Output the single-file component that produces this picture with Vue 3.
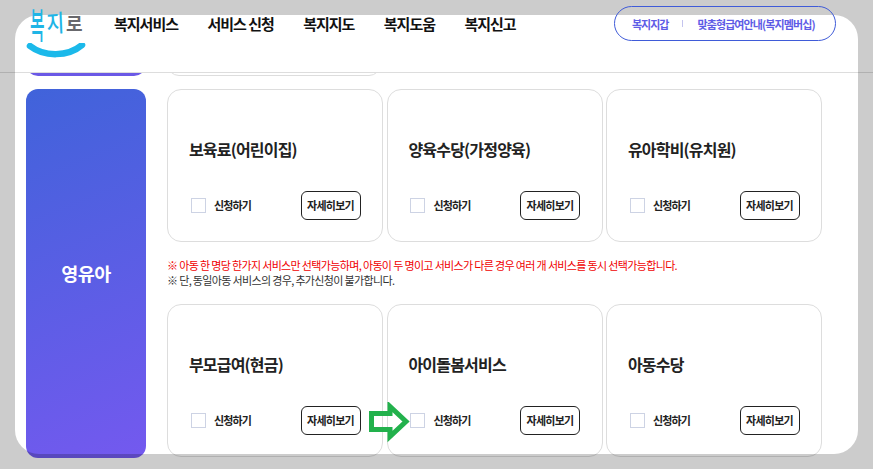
<script setup>
const navItems = ['복지서비스', '서비스 신청', '복지지도', '복지도움', '복지신고']
const rowOne = ['보육료(어린이집)', '양육수당(가정양육)', '유아학비(유치원)']
const rowTwo = ['부모급여(현금)', '아이돌봄서비스', '아동수당']
</script>

<template>
  <div class="page">
    <header class="header">
      <a class="logo" aria-label="복지로">
        <span class="logo-text">
          <span class="ch bok">복</span>
          <span class="ch ji">지</span>
          <span class="ch ro">로</span>
        </span>
        <svg class="smile" width="60" height="18" viewBox="0 0 60 18">
          <path d="M4 3 C 18 14, 42 14, 56 2" fill="none" stroke="#1bb9ea" stroke-width="6.5" stroke-linecap="round" />
        </svg>
      </a>
      <nav class="nav">
        <span v-for="item in navItems" :key="item">{{ item }}</span>
      </nav>
      <div class="pill">
        <span>복지지갑</span>
        <i class="sep"></i>
        <span class="tight">맞춤형급여안내(복지멤버십)</span>
      </div>
    </header>

    <main class="main">
      <div class="stub">
        <div class="stub-side"></div>
        <div class="stub-card"></div>
      </div>
      <section class="section">
        <aside class="side">영유아</aside>
        <div class="content">
          <div class="grid">
            <article v-for="t in rowOne" :key="t" class="card">
              <h3>{{ t }}</h3>
              <div class="actions">
                <span class="check"></span>
                <span class="label">신청하기</span>
                <button class="more">자세히보기</button>
              </div>
            </article>
          </div>
          <div class="notice">
            <p class="red">※ 아동 한 명당 한가지 서비스만 선택가능하며, 아동이 두 명이고 서비스가 다른 경우 여러 개 서비스를 동시 선택가능합니다.</p>
            <p>※ 단, 동일아동 서비스의 경우, 추가신청이 불가합니다.</p>
          </div>
          <div class="grid">
            <article v-for="t in rowTwo" :key="t" class="card">
              <h3>{{ t }}</h3>
              <div class="actions">
                <span class="check"></span>
                <span class="label">신청하기</span>
                <button class="more">자세히보기</button>
              </div>
            </article>
          </div>
        </div>
      </section>
    </main>

    <div class="spotlight"></div>

    <svg class="arrow" width="45" height="42" viewBox="0 0 45 42">
      <polygon points="4.5,11.5 23,11.5 23,4.5 39,19.5 23,34.5 23,27.5 4.5,27.5" fill="none" stroke="#22b14c" stroke-width="5" />
    </svg>
  </div>
</template>

<style scoped>
.page {
  position: relative;
  width: 873px;
  height: 469px;
  overflow: hidden;
  background: #fff;
  font-family: "Noto Sans CJK KR", "Noto Sans", sans-serif;
  color: #222;
}

.header {
  display: flex;
  align-items: flex-start;
  height: 72px;
  padding: 0 37px 0 26px;
  border-bottom: 1px solid #ddd;
}

.logo {
  position: relative;
  z-index: 3;
  display: flex;
  flex-direction: column;
  width: 60px;
  height: 62px;
  flex: none;
}

.logo-text {
  display: flex;
  align-items: flex-start;
  height: 43px;
  padding-left: 4px;
  line-height: 1;
}

.ch {
  display: block;
  transform-origin: left top;
}

.bok {
  width: 36px;
  margin: 5px -20px 0 0;
  color: #1fb5e6;
  font-size: 36px;
  font-weight: 500;
  transform: scaleX(0.44);
}

.ji {
  width: 20px;
  margin-top: 11px;
  color: #1fb5e6;
  font-size: 20px;
  font-weight: 500;
  transform: scale(0.95, 1.2) rotate(-3deg);
}

.ro {
  margin-top: 13px;
  color: #68686c;
  font-size: 19px;
  font-weight: 700;
  transform: scale(0.95, 1);
}

.nav {
  position: relative;
  z-index: 3;
  display: flex;
  gap: 29.4px;
  margin: 12px 0 0 28px;
  font-size: 15px;
  font-weight: 700;
  line-height: 24px;
  letter-spacing: -1px;
  white-space: nowrap;
  color: #111;
}

.pill {
  position: relative;
  z-index: 3;
  display: flex;
  align-items: center;
  gap: 14px;
  box-sizing: border-box;
  width: 222px;
  height: 35px;
  margin: 6px 0 0 auto;
  padding-left: 17px;
  border: 1px solid #3f5bd8;
  border-radius: 18px;
  font-size: 11px;
  font-weight: 700;
  letter-spacing: -1px;
  color: #5e5ce6;
  white-space: nowrap;
}

.tight {
  letter-spacing: -0.9px;
}

.sep {
  width: 1px;
  height: 7px;
  background: #c4c4ee;
}

.main {
  height: 396px;
  overflow: hidden;
  padding: 0 51px 0 26px;
}

.stub {
  display: flex;
  align-items: flex-end;
  gap: 21px;
  height: 3px;
  overflow: hidden;
}

.stub-side {
  width: 120px;
  height: 30px;
  flex: none;
  border-radius: 12px;
  background: #6b59e6;
}

.stub-card {
  width: 214px;
  height: 30px;
  flex: none;
  box-sizing: border-box;
  border: 1px solid #ddd;
  border-radius: 12px;
}

.section {
  display: flex;
  gap: 21px;
  margin-top: 13px;
  height: 369px;
}

.side {
  display: flex;
  align-items: center;
  justify-content: center;
  width: 120px;
  flex: none;
  padding-bottom: 2px;
  box-sizing: border-box;
  border-radius: 12px;
  background: linear-gradient(158deg, #4063da 0%, #7459ef 100%);
  color: #fff;
  font-size: 18.5px;
  font-weight: 700;
  letter-spacing: -0.5px;
}

.content {
  display: flex;
  flex-direction: column;
  width: 655px;
}

.grid {
  display: grid;
  grid-template-columns: repeat(3, 1fr);
  gap: 3.5px;
}

.card {
  height: 153px;
  box-sizing: border-box;
  padding: 0 21.5px 0 20.9px;
  border: 1px solid #ddd;
  border-radius: 14px;
  background: #fff;
}

.card h3 {
  margin: 47px 0 0;
  font-size: 16px;
  font-weight: 700;
  line-height: 24px;
  letter-spacing: -0.8px;
  color: #222;
}

.actions {
  display: flex;
  align-items: center;
  margin-top: 30px;
  height: 29px;
}

.check {
  width: 15px;
  height: 15px;
  box-sizing: border-box;
  margin-left: 2px;
  border: 1px solid #cdd3e4;
}

.label {
  margin-left: 8px;
  padding-bottom: 2px;
  font-size: 11px;
  font-weight: 700;
  letter-spacing: -0.85px;
  color: #222;
}

.more {
  margin-left: auto;
  width: 60px;
  height: 29px;
  box-sizing: border-box;
  padding: 0 0 2px;
  border: 1px solid #222;
  border-radius: 6px;
  background: #fff;
  font-family: inherit;
  font-size: 11px;
  font-weight: 700;
  letter-spacing: -0.75px;
  color: #222;
}

.notice {
  padding-top: 16px;
  height: 62px;
  box-sizing: border-box;
  font-size: 11px;
  line-height: 15px;
  letter-spacing: -0.65px;
  white-space: nowrap;
  color: #333;
}

.notice p {
  margin: 0;
}

.notice .red {
  color: #f00000;
}

.spotlight {
  position: absolute;
  left: 15px;
  top: 15px;
  width: 843px;
  height: 439px;
  border-radius: 24px;
  box-shadow: 0 0 0 900px rgba(0, 0, 0, 0.2);
  pointer-events: none;
  z-index: 2;
}

.arrow {
  position: absolute;
  left: 367px;
  top: 402px;
  z-index: 4;
}
</style>

<style>
html, body { margin: 0; padding: 0; background: #fff; }
</style>
